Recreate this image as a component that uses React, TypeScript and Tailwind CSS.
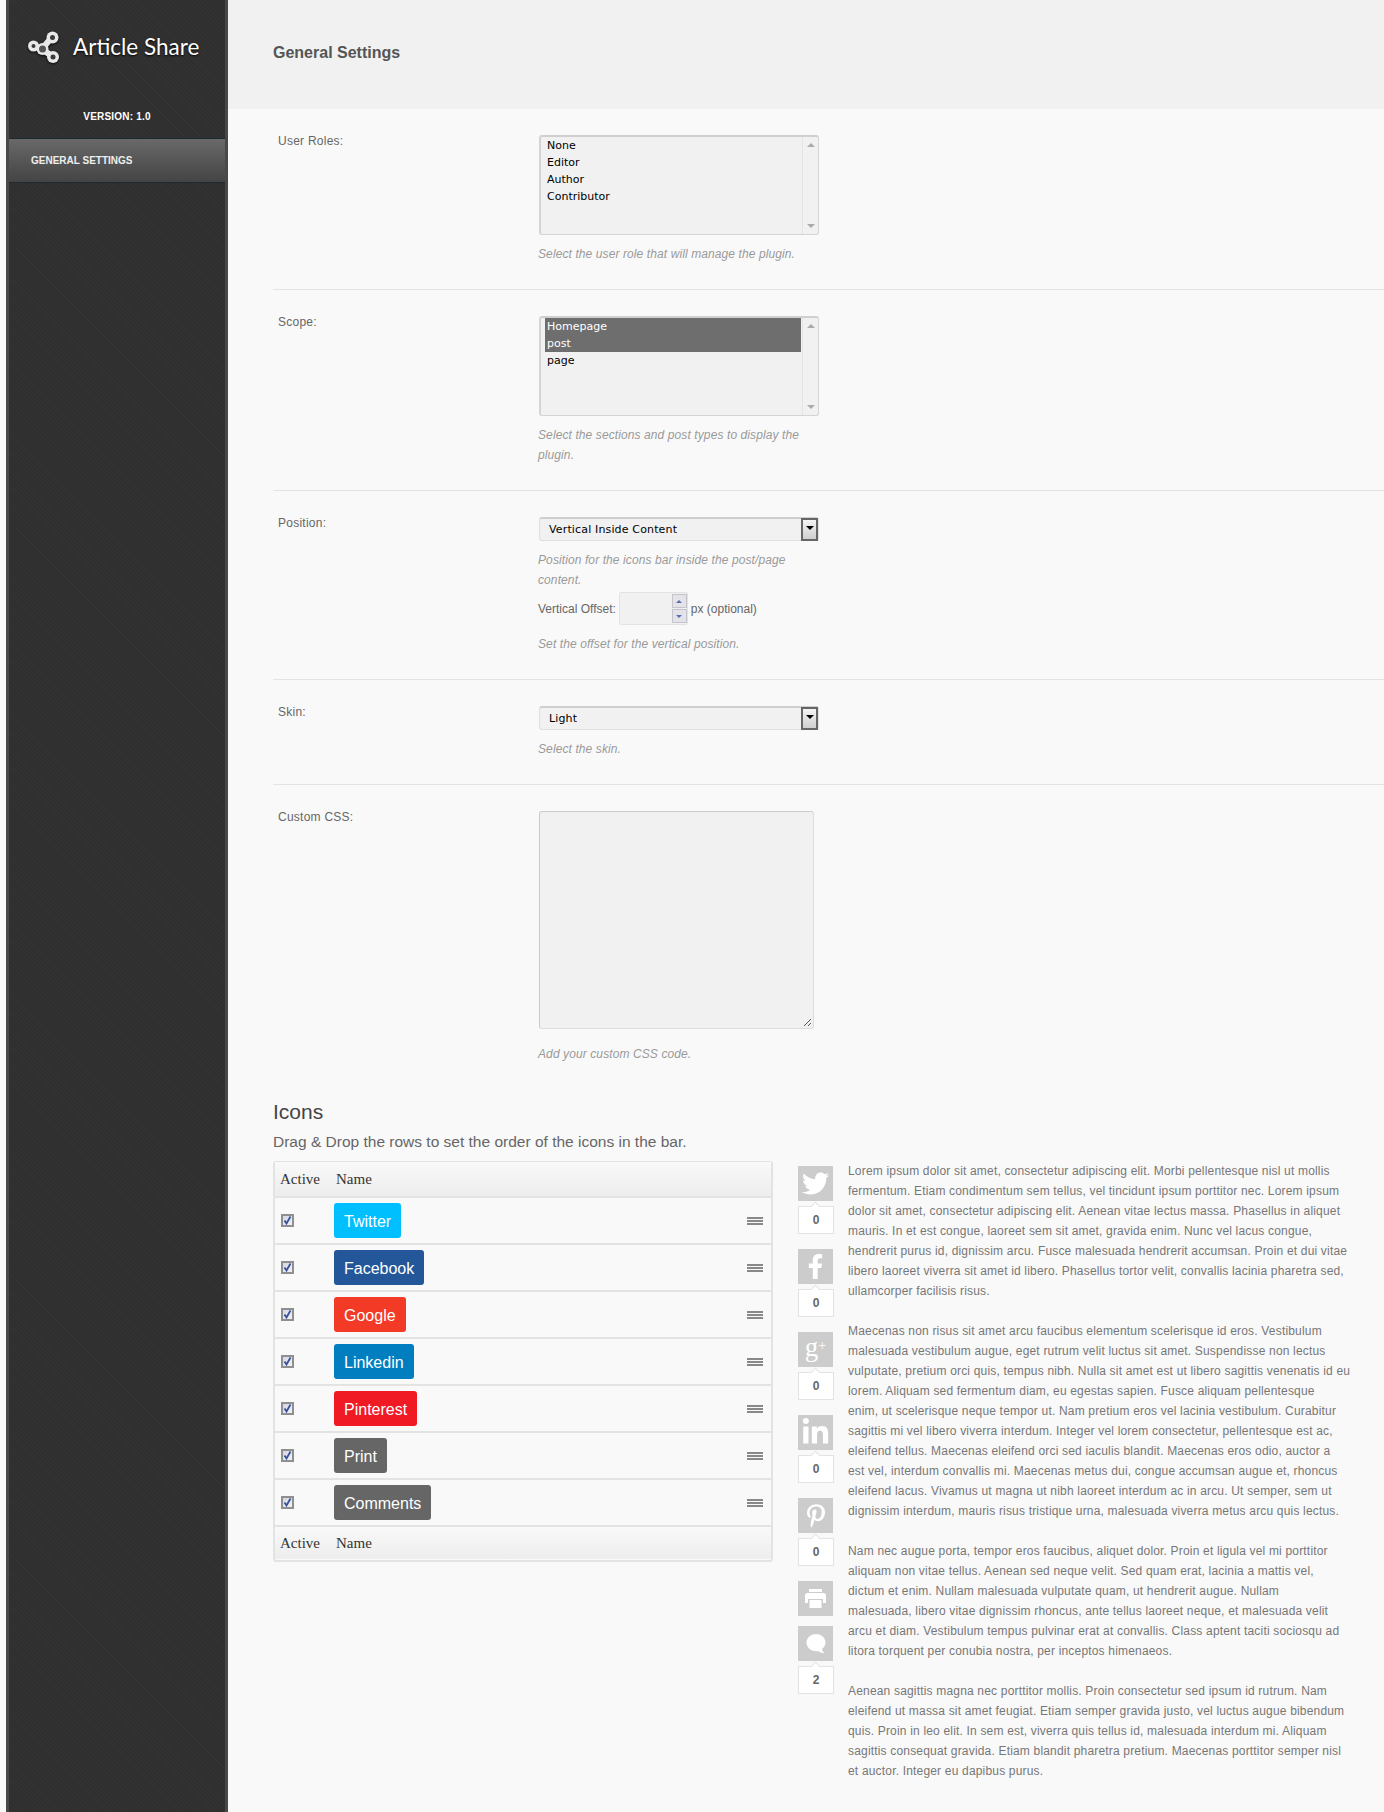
import React from "react";
import {FaTwitter, FaFacebookF, FaLinkedinIn, FaPinterestP} from "react-icons/fa";

const paragraphs: string[][] = [
    [
        "Lorem ipsum dolor sit amet, consectetur adipiscing elit. Morbi pellentesque nisl ut mollis",
        "fermentum. Etiam condimentum sem tellus, vel tincidunt ipsum porttitor nec. Lorem ipsum",
        "dolor sit amet, consectetur adipiscing elit. Aenean vitae lectus massa. Phasellus in aliquet",
        "mauris. In et est congue, laoreet sem sit amet, gravida enim. Nunc vel lacus congue,",
        "hendrerit purus id, dignissim arcu. Fusce malesuada hendrerit accumsan. Proin et dui vitae",
        "libero laoreet viverra sit amet id libero. Phasellus tortor velit, convallis lacinia pharetra sed,",
        "ullamcorper facilisis risus.",
    ],
    [
        "Maecenas non risus sit amet arcu faucibus elementum scelerisque id eros. Vestibulum",
        "malesuada vestibulum augue, eget rutrum velit luctus sit amet. Suspendisse non lectus",
        "vulputate, pretium orci quis, tempus nibh. Nulla sit amet est ut libero sagittis venenatis id eu",
        "lorem. Aliquam sed fermentum diam, eu egestas sapien. Fusce aliquam pellentesque",
        "enim, ut scelerisque neque tempor ut. Nam pretium eros vel lacinia vestibulum. Curabitur",
        "sagittis mi vel libero viverra interdum. Integer vel lorem consectetur, pellentesque est ac,",
        "eleifend tellus. Maecenas eleifend orci sed iaculis blandit. Maecenas eros odio, auctor a",
        "est vel, interdum convallis mi. Maecenas metus dui, congue accumsan augue et, rhoncus",
        "eleifend lacus. Vivamus ut magna ut nibh laoreet interdum ac in arcu. Ut semper, sem ut",
        "dignissim interdum, mauris risus tristique urna, malesuada viverra metus arcu quis lectus.",
    ],
    [
        "Nam nec augue porta, tempor eros faucibus, aliquet dolor. Proin et ligula vel mi porttitor",
        "aliquam non vitae tellus. Aenean sed neque velit. Sed quam erat, lacinia a mattis vel,",
        "dictum et enim. Nullam malesuada vulputate quam, ut hendrerit augue. Nullam",
        "malesuada, libero vitae dignissim rhoncus, ante tellus laoreet neque, et malesuada velit",
        "arcu et diam. Vestibulum tempus pulvinar erat at convallis. Class aptent taciti sociosqu ad",
        "litora torquent per conubia nostra, per inceptos himenaeos.",
    ],
    [
        "Aenean sagittis magna nec porttitor mollis. Proin consectetur sed ipsum id rutrum. Nam",
        "eleifend ut massa sit amet feugiat. Etiam semper gravida justo, vel luctus augue bibendum",
        "quis. Proin in leo elit. In sem est, viverra quis tellus id, malesuada interdum mi. Aliquam",
        "sagittis consequat gravida. Etiam blandit pharetra pretium. Maecenas porttitor semper nisl",
        "et auctor. Integer eu dapibus purus.",
    ],
];

const networks = [
    {name: "Twitter", color: "bg-[#00bfff]"},
    {name: "Facebook", color: "bg-[#235799]"},
    {name: "Google", color: "bg-[#f33a26]"},
    {name: "Linkedin", color: "bg-[#007ec0]"},
    {name: "Pinterest", color: "bg-[#f01a25]"},
    {name: "Print", color: "bg-[#666666]"},
    {name: "Comments", color: "bg-[#666666]"},
];

const PrintIcon = () => (
    <svg width="21" height="19" viewBox="0 0 21 19" fill="#fff">
        <path d="M4 0h13v3H4z"/>
        <path d="M2.500 4h16A2.500 2.500 0 0 1 21 6.500V14h-3v-4H3v4H0V6.500A2.500 2.500 0 0 1 2.500 4z"/>
        <path d="M4.500 11h12v8h-12z"/>
    </svg>
);

const BubbleIcon = () => (
    <svg width="20" height="20" viewBox="0 0 20 20" fill="#fff">
        <path d="M10 0c5.300 0 9.500 3.800 9.500 8.500 0 2.700-1.400 5-3.500 6.600.2 1.500 1.300 3.300 2.400 3.900-2.100.2-4.500-.6-6-2.100-.8.200-1.600.3-2.400.3C4.700 17.200.500 13.300.500 8.500S4.700 0 10 0z"/>
    </svg>
);

const ShareLogo = () => (
    <svg width="32" height="32" viewBox="0 0 32 32" fill="none" className="drop-shadow-[0_1px_1px_rgba(0,0,0,0.8)]">
        <path d="M5 15 L14 18 L24 6 M14 18 L25 26" stroke="#e8e8e8" strokeWidth="6"/>
        <circle cx="5.500" cy="15" r="5.500" fill="#e8e8e8"/>
        <circle cx="24.500" cy="6.500" r="6" fill="#e8e8e8"/>
        <circle cx="25" cy="26" r="6" fill="#e8e8e8"/>
        <circle cx="14.500" cy="18" r="6" fill="#e8e8e8"/>
        <circle cx="5.500" cy="15" r="2" fill="#3a3a3a"/>
        <circle cx="24.500" cy="6.500" r="2.500" fill="#3a3a3a"/>
        <circle cx="25" cy="26" r="2.500" fill="#3a3a3a"/>
        <circle cx="14.500" cy="18" r="3.500" fill="#555"/>
    </svg>
);

const Help = ({children, className = ""}: {children: React.ReactNode, className?: string}) => (
    <p className={`text-[12px] leading-[20px] italic tracking-[0.1px] text-[#999] ${className}`}>{children}</p>
);

const ListBox = ({items, selected = 0}: {items: string[], selected?: number}) => (
    <div className="relative w-[280px] h-[100px] bg-[#f1f1f1] border border-[#d4d4d4] border-t-2 border-l-2 border-t-[#cfcfcf] rounded-[3px] pl-[4px] font-['DejaVu_Sans',sans-serif] text-[11px] leading-[17px] text-black">
        {items.map((item, i) => (
            <div key={item} className={`w-[256px] pl-[2px] ${i < selected ? 'bg-[#6e6e6e] text-white' : ''}`}>{item}</div>
        ))}
        <div className="absolute right-0 top-0 bottom-0 w-[16px] border-l border-[#e4e4e4] flex flex-col items-center justify-between py-[6px]">
            <span className="w-0 h-0 border-x-[4px] border-x-transparent border-b-[4px] border-b-[#aaa]"/>
            <span className="w-0 h-0 border-x-[4px] border-x-transparent border-t-[4px] border-t-[#aaa]"/>
        </div>
    </div>
);

const Select = ({value}: {value: string}) => (
    <div className="relative w-[280px] h-[24px] bg-[#f1f1f1] border border-[#e0e0e0] border-t-2 border-t-[#cfcfcf] rounded-[3px] pl-[9px] font-['DejaVu_Sans',sans-serif] text-[11px] tracking-[0.15px] leading-[22px] text-black">
        {value}
        <div className="absolute right-0 -top-[1px] w-[17px] h-[23px] border-2 border-[#666] bg-gradient-to-b from-[#f4f4f4] to-[#cfcfcf] flex justify-center pt-[6px]">
            <span className="w-0 h-0 border-x-[4px] border-x-transparent border-t-[4px] border-t-black"/>
        </div>
    </div>
);

const Row = ({label, height, children}: {label: string, height: number | string, children: React.ReactNode}) => (
    <div className="flex border-b border-[#e3e3e3] pt-[26px]" style={{height}}>
        <div className="w-[266px] pl-[5px] text-[12px] leading-[14px] tracking-[0.25px] text-[#666] -mt-[1px]">{label}</div>
        <div className="w-[300px]">{children}</div>
    </div>
);

const Checkbox = () => (
    <span className="w-[13px] h-[13px] border-2 border-[#8f8f8f] bg-gradient-to-br from-[#d4d6e4] to-[#f2f2f6] flex items-center justify-center">
        <svg width="9" height="9" viewBox="0 0 9 9" fill="none"><path d="M1.500 4.500 L3.500 7.500 L7.500 .500" stroke="#34539a" strokeWidth="1.800"/></svg>
    </span>
);

const TableHead = ({className}: {className: string}) => (
    <div className={`flex items-center bg-gradient-to-b from-[#f9f9f9] to-[#ededed] font-['Liberation_Serif',serif] text-[15px] text-[#333] ${className}`}>
        <span className="w-[61px] pl-[5px]">Active</span>
        <span>Name</span>
    </div>
);

const SocialTile = ({icon, count}: {icon: React.ReactNode, count?: number}) => (
    <div className={count !== undefined ? "mb-[15px]" : "mb-[10px]"}>
        <div className="w-[35px] h-[35px] bg-[#cccccc] flex items-center justify-center text-white">{icon}</div>
        {count !== undefined && (
            <div className="relative mt-[5px] w-[36px] h-[28px] border border-[#e3e3e3] bg-white text-center text-[12px] leading-[26px] font-bold text-[#666]">
                <span className="absolute left-[13px] -top-[4px] w-[7px] h-[7px] rotate-45 bg-white border-l border-t border-[#e3e3e3]"/>
                <span className="relative">{count}</span>
            </div>
        )}
    </div>
);

export default function App() {
    return (
        <div className="flex min-h-[1812px] bg-[#f9f9f9] font-['Liberation_Sans',Arial,sans-serif]">
            <div className="ml-[6px] w-[222px] shrink-0 border-x-[3px] border-[#484848] bg-[#2f2f2f] bg-[repeating-linear-gradient(45deg,rgba(255,255,255,0.02)_0,rgba(255,255,255,0.02)_1px,transparent_1px,transparent_3px)]">
                <div className="h-[138px]">
                    <div className="flex items-center pl-[19px] pt-[31px] gap-[13px]">
                        <ShareLogo/>
                        <span className="font-['Lato',sans-serif] text-[22.500px] leading-[32px] text-white [text-shadow:0_1px_2px_#000]">Article Share</span>
                    </div>
                    <div className="mt-[47px] text-center text-[10px] tracking-[0.2px] font-bold leading-[12px] text-white pt-[1px]">VERSION: 1.0</div>
                </div>
                <div className="h-[45px] border-y border-[#1b2a30] bg-gradient-to-b from-[#696969] to-[#444] pl-[22px] text-[10px] font-bold leading-[43px] text-[#eee] uppercase">General Settings</div>
            </div>
            <div className="flex-1 min-w-0">
                <div className="h-[109px] bg-[#f1f1f1] pl-[45px] text-[16px] font-bold leading-[106px] text-[#555]">General Settings</div>
                <div className="pl-[45px]">
                    <Row label="User Roles:" height={181}>
                        <ListBox items={["None", "Editor", "Author", "Contributor"]}/>
                        <Help className="mt-[9px] -ml-[1px]">Select the user role that will manage the plugin.</Help>
                    </Row>
                    <Row label="Scope:" height={201}>
                        <ListBox items={["Homepage", "post", "page"]} selected={2}/>
                        <Help className="mt-[9px] -ml-[1px] w-[280px]">Select the sections and post types to display the plugin.</Help>
                    </Row>
                    <Row label="Position:" height={189}>
                        <Select value="Vertical Inside Content"/>
                        <Help className="mt-[9px] -ml-[1px] w-[280px]">Position for the icons bar inside the post/page content.</Help>
                        <div className="flex items-center -ml-[1px] text-[12px] text-[#666] mt-[2px]">
                            Vertical Offset:
                            <div className="relative ml-[3px] mr-[3px] w-[69px] h-[33px] bg-[#f1f1f1] border border-[#e3e3e3] rounded-[2px]">
                                <div className="absolute right-0 top-0 bottom-0 w-[15px] flex flex-col gap-[1px] pt-[1px]">
                                    <span className="h-[14px] border border-[#c4c4cc] bg-[#e4e4e8] flex justify-center items-center"><span className="w-0 h-0 border-x-[3px] border-x-transparent border-b-[3px] border-b-[#5a6fb8]"/></span>
                                    <span className="h-[14px] border border-[#c4c4cc] bg-[#e4e4e8] flex justify-center items-center"><span className="w-0 h-0 border-x-[3px] border-x-transparent border-t-[3px] border-t-[#5a6fb8]"/></span>
                                </div>
                            </div>
                            px (optional)
                        </div>
                        <Help className="mt-[9px] -ml-[1px]">Set the offset for the vertical position.</Help>
                    </Row>
                    <Row label="Skin:" height={105}>
                        <Select value="Light"/>
                        <Help className="mt-[9px] -ml-[1px]">Select the skin.</Help>
                    </Row>
                    <div className="flex pt-[26px]">
                        <div className="w-[266px] pl-[5px] text-[12px] leading-[14px] tracking-[0.25px] text-[#666] -mt-[1px]">Custom CSS:</div>
                        <div>
                            <div className="relative w-[275px] h-[218px] bg-[#f1f1f1] border border-[#ddd] border-t-[#ccc] border-l-[#ccc] rounded-[3px]">
                                <svg className="absolute right-[1px] bottom-[1px]" width="9" height="9" viewBox="0 0 9 9"><path d="M1 8 L8 1 M5 8 L8 5" stroke="#555"/></svg>
                            </div>
                            <Help className="mt-[15px] -ml-[1px]">Add your custom CSS code.</Help>
                        </div>
                    </div>
                    <h2 className="mt-[34px] text-[21px] leading-[28px] text-[#444]">Icons</h2>
                    <p className="mt-[4px] text-[15.500px] leading-[24px] text-[#666]">Drag &amp; Drop the rows to set the order of the icons in the bar.</p>
                    <div className="flex mt-[7px]">
                        <div className="w-[500px] h-[401px] shrink-0 border-2 border-[#e3e3e3] rounded-[3px]">
                            <TableHead className="h-[36px] border-b-2 border-[#e3e3e3] -mt-[1px]"/>
                            {networks.map(n => (
                                <div key={n.name} className="flex items-center h-[47px] border-b-2 border-[#e3e3e3] pl-[6px] pr-[8px]">
                                    <Checkbox/>
                                    <div className="ml-[40px] flex-1">
                                        <span className={`inline-block h-[35px] px-[10px] rounded-[3px] text-[16px] leading-[37px] text-white ${n.color}`}>{n.name}</span>
                                    </div>
                                    <span className="w-[16px] h-[8px] flex flex-col justify-between">
                                        <span className="h-[2px] bg-[#888]"/>
                                        <span className="h-[2px] bg-[#888]"/>
                                        <span className="h-[2px] bg-[#888]"/>
                                    </span>
                                </div>
                            ))}
                            <TableHead className="h-[32px]"/>
                        </div>
                        <div className="ml-[25px] w-[36px] shrink-0 mt-[5px]">
                            <SocialTile count={0} icon={<FaTwitter size={27}/>}/>
                            <SocialTile count={0} icon={<FaFacebookF size={25}/>}/>
                            <SocialTile count={0} icon={<span className="font-['Liberation_Serif',serif] text-[27px] leading-[30px] -mt-[5px]">g<sup className="text-[14px] -top-[6px]">+</sup></span>}/>
                            <SocialTile count={0} icon={<FaLinkedinIn size={29}/>}/>
                            <SocialTile count={0} icon={<FaPinterestP size={24}/>}/>
                            <SocialTile icon={<PrintIcon/>}/>
                            <SocialTile count={2} icon={<BubbleIcon/>}/>
                        </div>
                        <div className="ml-[14px] text-[12px] leading-[20px] tracking-[0.18px] text-[#777] whitespace-nowrap">
                            {paragraphs.map((lines, i) => (
                                <p key={i} className="mb-[20px]">
                                    {lines.map(line => <span key={line} className="block">{line}</span>)}
                                </p>
                            ))}
                        </div>
                    </div>
                </div>
            </div>
        </div>
    );
}
